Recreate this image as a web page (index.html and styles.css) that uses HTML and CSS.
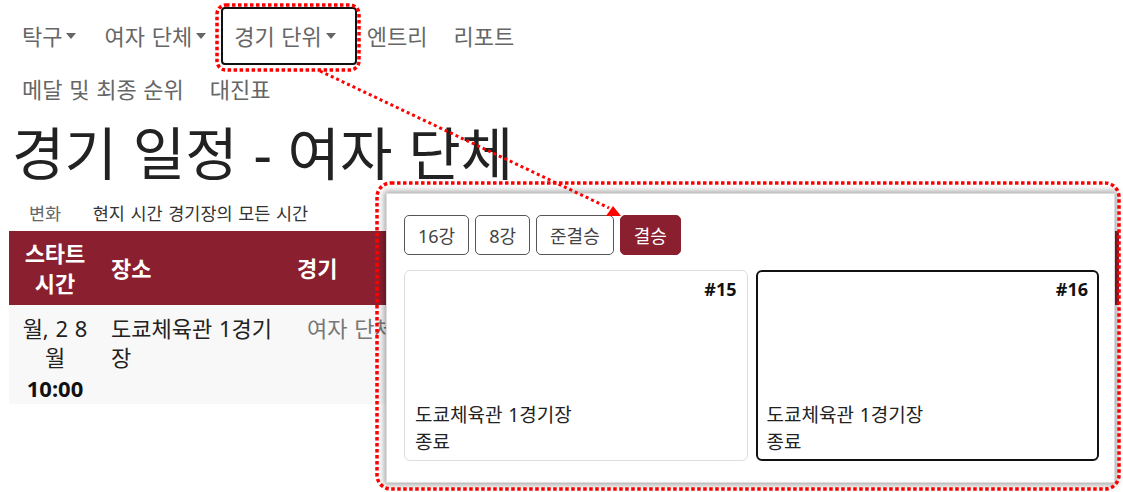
FILE: index.html
```html
<!DOCTYPE html>
<html lang="ko">
<head>
<meta charset="utf-8">
<title>경기 일정 - 여자 단체</title>
<link rel="stylesheet" href="styles.css">
</head>
<body>
<nav class="nav">
  <div class="nav-row">
    <a class="nav-link">탁구<span class="caret"></span></a>
    <a class="nav-link">여자 단체<span class="caret"></span></a>
    <a class="nav-link active">경기 단위<span class="caret"></span></a>
    <a class="nav-link">엔트리</a>
    <a class="nav-link">리포트</a>
  </div>
  <div class="nav-row nav-row-2">
    <a class="nav-link">메달 및 최종 순위</a>
    <a class="nav-link">대진표</a>
  </div>
</nav>

<h1 class="title">경기 일정 - 여자 단체</h1>

<div class="tz">
  <span class="tz-label">변화</span>
  <span class="tz-value">현지 시간 경기장의 모든 시간</span>
</div>

<table class="schedule">
  <thead>
    <tr>
      <th class="col-time">스타트 시간</th>
      <th class="col-venue">장소</th>
      <th class="col-event">경기</th>
    </tr>
  </thead>
  <tbody>
    <tr>
      <td class="col-time">월, 2 8<br>월<br><strong>10:00</strong></td>
      <td class="col-venue">도쿄체육관 1경기장</td>
      <td class="col-event event-name">여자 단체</td>
    </tr>
  </tbody>
</table>

<div class="zoom-panel">
  <div class="rounds">
    <button class="round">16강</button>
    <button class="round">8강</button>
    <button class="round">준결승</button>
    <button class="round selected">결승</button>
  </div>
  <div class="cards">
    <div class="card">
      <div class="card-num">#15</div>
      <div class="card-body">도쿄체육관 1경기장<br>종료</div>
    </div>
    <div class="card card-active">
      <div class="card-num">#16</div>
      <div class="card-body">도쿄체육관 1경기장<br>종료</div>
    </div>
  </div>
</div>

<svg class="annot" width="1123" height="492" viewBox="0 0 1123 492">
  <rect x="217" y="5" width="142" height="65" rx="9" fill="none" stroke="#ff0000" stroke-width="3.5" stroke-dasharray="3.5 2.5"/>
  <rect x="377" y="183" width="742" height="306" rx="14" fill="none" stroke="#ff0000" stroke-width="3.5" stroke-dasharray="3.5 2.5"/>
  <line x1="320" y1="71" x2="609" y2="208" stroke="#ff0000" stroke-width="3" stroke-dasharray="3 3"/>
  <polygon points="613,206 606,216 621,216" fill="#ff0000"/>
</svg>
</body>
</html>
```
FILE: styles.css
```css
html, body {
  margin: 0;
  padding: 0;
  background: #fff;
}
body {
  position: relative;
  width: 1123px;
  height: 492px;
  overflow: hidden;
  font-family: "Noto Sans", "Noto Sans CJK KR", sans-serif;
  color: #222;
  word-spacing: 1px;
}

/* navigation */
.nav {
  padding: 7px 0 0 9px;
}
.nav-row {
  display: flex;
  align-items: center;
  height: 58px;
}
.nav-row-2 {
  height: 40px;
  margin-top: 4px;
}
.nav-link {
  display: flex;
  align-items: center;
  height: 100%;
  box-sizing: border-box;
  padding: 0 13px 3px;
  font-size: 22px;
  color: #666;
  text-decoration: none;
  white-space: nowrap;
}
.nav-link.active {
  border: 2px solid #111;
  border-radius: 4px;
  padding: 0 17px 3px 11px;
  margin-right: -3px;
}
.caret {
  display: inline-block;
  width: 0;
  height: 0;
  margin: 3px 2px 0 4px;
  border-top: 6px solid #666;
  border-left: 5px solid transparent;
  border-right: 5px solid transparent;
}

/* title */
.title {
  margin: 14px 0 0;
  padding-left: 12px;
  font-size: 57px;
  font-weight: 400;
  line-height: 60px;
  color: #222;
}

/* timezone line */
.tz {
  margin-top: 17px;
  padding-left: 29px;
  font-size: 17.5px;
  line-height: 26px;
}
.tz-label {
  color: #666;
  margin-right: 26px;
}
.tz-value {
  color: #333;
}

/* schedule table */
.schedule {
  margin: 5px 0 0 9px;
  width: 1110px;
  border-collapse: collapse;
  font-size: 22px;
}
.schedule th {
  background: #8a1f2f;
  color: #fff;
  font-weight: 700;
  text-align: left;
  vertical-align: middle;
  padding: 7px 10px;
  line-height: 30px;
  height: 60px;
}
.schedule td {
  background: #f8f8f8;
  vertical-align: top;
  padding: 9px 10px 0;
  line-height: 29px;
  height: 90px;
}
.schedule .col-time {
  width: 72px;
  text-align: center;
}
.schedule .col-venue {
  width: 166px;
}
.schedule td.event-name {
  padding-left: 20px;
  color: #777;
}
.schedule strong {
  display: inline-block;
  line-height: 32px;
  font-weight: 700;
  color: #111;
}

/* zoomed panel */
.zoom-panel {
  position: absolute;
  left: 386px;
  top: 193px;
  width: 729px;
  height: 290px;
  box-sizing: border-box;
  background: #fff;
  border: 1px solid #ddd;
  box-shadow: 0 0 6px 2px rgba(0, 0, 0, 0.35);
  padding: 21px 15px 21px 17px;
  display: flex;
  flex-direction: column;
  gap: 15px;
}
.rounds {
  display: flex;
  gap: 6px;
}
.round {
  height: 40px;
  padding: 0 13px;
  border: 1.5px solid #555;
  border-radius: 5px;
  background: #fff;
  color: #444;
  font-family: "Noto Sans", "Noto Sans CJK KR", sans-serif;
  font-size: 18px;
}
.round.selected {
  background: #8a1f2f;
  border-color: #8a1f2f;
  color: #fff;
}
.cards {
  flex: 1;
  display: flex;
  gap: 8px;
}
.card {
  flex: 1;
  box-sizing: border-box;
  border: 1px solid #ddd;
  border-radius: 6px;
  padding: 6px 10px 4px 10px;
  display: flex;
  flex-direction: column;
  justify-content: space-between;
}
.card-active {
  border: 2px solid #111;
  padding: 5px 9px 3px 9px;
}
.card-num {
  text-align: right;
  font-size: 18px;
  font-weight: 700;
  line-height: 24px;
  color: #111;
}
.card-body {
  font-size: 19px;
  line-height: 27px;
  color: #222;
}

/* annotation overlay */
.annot {
  position: absolute;
  left: 0;
  top: 0;
  pointer-events: none;
}
```
